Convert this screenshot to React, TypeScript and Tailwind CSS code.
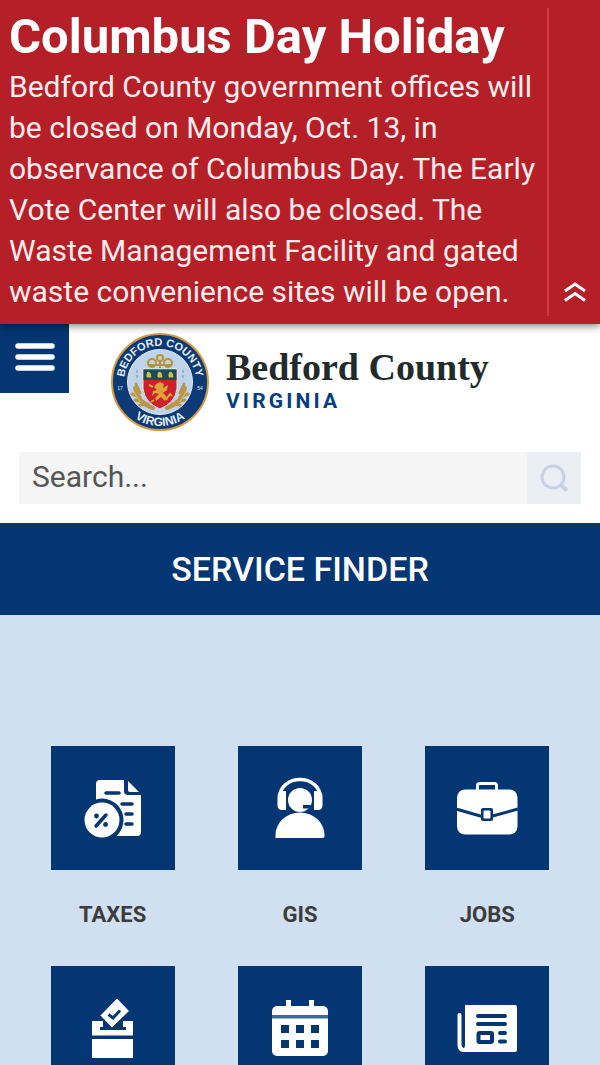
import type { ReactNode } from "react";

const NAVY = "#043673";

type Service = { name: string; label?: string; icon: ReactNode };

function TaxesIcon() {
  return (
    <>
      <path d="M49 34h24v11a4 4 0 0 0 4 4h13v37a4 4 0 0 1-4 4H45V38a4 4 0 0 1 4-4z" fill="#fff" />
      <path d="M77 35v9q0 2 2 2h9z" fill="#fff" />
      <path d="M55 47h13M71 58h10M75 68h6M75 78h6" stroke={NAVY} strokeWidth="3.5" strokeLinecap="round" />
      <circle cx="51" cy="74" r="21.5" fill={NAVY} />
      <circle cx="51" cy="74" r="17.5" fill="#fff" />
      <path d="M45 80l10-11" stroke={NAVY} strokeWidth="3.5" strokeLinecap="round" />
      <circle cx="45.5" cy="70" r="2.4" fill={NAVY} />
      <circle cx="54.5" cy="78.5" r="2.4" fill={NAVY} />
    </>
  );
}

function GisIcon() {
  return (
    <>
      <path d="M42 50a20 16.5 0 0 1 40 0" fill="none" stroke="#fff" strokeWidth="3.5" />
      <path d="M48 45v19h-4q-4 0-4.5-4V50q.5-5 4.5-5zM76 45v19h4q4 0 4.5-4V50q-.5-5-4.5-5z" fill="#fff" />
      <circle cx="62" cy="54" r="12" fill="#fff" />
      <path d="M65 59h11v3.5H65z" fill={NAVY} />
      <path d="M37.5 92v-3a24.5 22.5 0 0 1 49 0v1q0 2-2 2z" fill="#fff" />
    </>
  );
}

function JobsIcon() {
  return (
    <>
      <path d="M52.5 44v-4.5q0-2 2-2h15q2 0 2 2V44" fill="none" stroke="#fff" strokeWidth="3" />
      <rect x="32" y="43.5" width="60.5" height="45" rx="8" fill="#fff" />
      <path d="M31 63l26 7.5h9L93 63" fill="none" stroke={NAVY} strokeWidth="3" />
      <rect x="56" y="62" width="12" height="13" rx="2" fill={NAVY} />
      <rect x="58.5" y="64.5" width="7" height="8" rx="1" fill="#fff" />
    </>
  );
}

function VoteIcon() {
  return (
    <>
      <path d="M41 55h41v14.5H41zM41 73h41v19H41z" fill="#fff" />
      <path d="M49 61h3V53h20v8h3v3H49z" fill={NAVY} />
      <path d="M66 32L78.5 45 61 62 49 49.5z" fill="#fff" stroke={NAVY} strokeWidth="1" />
      <path d="M57.5 48.5l4.5 3.5 7-7.5" fill="none" stroke={NAVY} strokeWidth="3" />
    </>
  );
}

function CalendarIcon() {
  return (
    <>
      <path d="M48 34h5v8h-5zM71 34h5v8h-5z" fill="#fff" />
      <rect x="34" y="40" width="56" height="50" rx="5" fill="#fff" />
      <path d="M34 49h56v3.5H34z" fill="#416797" />
      <path
        d="M43 59h8v8h-8zM58 59h8v8h-8zM73 59h8v8h-8zM43 74h8v8h-8zM58 74h8v8h-8zM73 74h8v8h-8z"
        fill={NAVY}
      />
    </>
  );
}

function NewsIcon() {
  return (
    <>
      <path d="M40 39h50q2 0 2 2v43q0 2-2 2H38q-5.500-1-5.500-7V49q0-2 2-2t2 2v30q.5 3 2 3t1.500-3z" fill="#fff" />
      <path d="M53 50h27M53 58h27M75 67h5M75 75.500h5" stroke={NAVY} strokeWidth="4" strokeLinecap="round" />
      <rect x="53.5" y="67" width="13.5" height="9" rx="1" fill="none" stroke={NAVY} strokeWidth="4" />
    </>
  );
}

const services: Service[] = [
  { name: "taxes", label: "TAXES", icon: <TaxesIcon /> },
  { name: "gis", label: "GIS", icon: <GisIcon /> },
  { name: "jobs", label: "JOBS", icon: <JobsIcon /> },
  { name: "vote", icon: <VoteIcon /> },
  { name: "calendar", icon: <CalendarIcon /> },
  { name: "news", icon: <NewsIcon /> },
];

function Seal() {
  return (
    <svg viewBox="0 0 98 98" className="size-[98px] shrink-0" aria-hidden="true">
      <circle cx="49" cy="49" r="48" fill="#0b3a75" stroke="#d59a45" strokeWidth="2" />
      <circle cx="49" cy="49" r="32.5" fill="#bfd3ea" stroke="#e5edf5" strokeWidth="1" />
      <path id="seal-top" d="M13.5 56A36.2 36.2 0 1 1 84.5 56" fill="none" />
      <path id="seal-bottom" d="M8 65A44 44 0 0 0 90 65" fill="none" />
      <g fill="#e6eef7" fontFamily="Liberation Sans, sans-serif" fontWeight="bold" textAnchor="middle">
        <text fontSize="11">
          <textPath href="#seal-top" startOffset="50%">BEDFORD COUNTY</textPath>
        </text>
        <text fontSize="12">
          <textPath href="#seal-bottom" startOffset="50%">VIRGINIA</textPath>
        </text>
        <text x="9" y="57" fontSize="5" fontWeight="normal">17</text>
        <text x="89" y="57" fontSize="5" fontWeight="normal">54</text>
      </g>
      {/* wheat on both sides of the shield */}
      <g fill="none" stroke="#b8964a" strokeLinecap="round">
        <path d="M24 55q3 15 18 20M74 55q-3 15-18 20" strokeWidth="4" />
        <path d="M21 61l8 3M24 67l9 2M29 72l8-1M25 51l4 9M77 61l-8 3M74 67l-9 2M69 72l-8-1M73 51l-4 9" strokeWidth="3" />
        <path d="M22 57l7 12M76 57l-7 12" stroke="#ddc178" strokeWidth="1" />
      </g>
      <path d="M26 37v10M72 37v10" stroke="#788ba2" strokeWidth="1" strokeDasharray="3 2" />
      <g fill="#c9d3cd" stroke="#b39243" strokeWidth="2">
        <circle cx="41" cy="30" r="4" />
        <circle cx="57" cy="30" r="4" />
        <path d="M38 32h22M49 26v9" />
        <circle cx="49" cy="25" r="3" />
      </g>
      <path d="M32 36h34v20q-2 14-17 20-15-6-17-20z" fill="#cf202b" stroke="#e8e7df" strokeWidth="1" />
      <path d="M32.5 36.500h33V47h-33z" fill="#14505c" />
      <path d="M36 44v-3l1-2 2 1 1 4zM47 44v-3l1-2 2 1 1 4zM58 44v-3l1-2 2 1 1 4z" fill="#d4bd4e" stroke="#d4bd4e" />
      <path
        d="M45 51l4-2 4 2-1 4 5-3-1 5-4 3 4 4-2 4-4-4-5 4-1-3 4-4-4-1-3 3 1-5 4-1-3-3z"
        fill="#dca537"
      />
      <path d="M55 67l4-6 2 2M42 54l-4-2M43 67l-3 2" fill="none" stroke="#dca537" strokeWidth="2" />
    </svg>
  );
}

function Alert() {
  return (
    <section className="relative z-10 flex bg-[#b52028] py-2 text-white shadow-[0_2px_8px_rgba(0,0,0,0.5)]">
      <div className="flex-1 pb-1 pl-[9px]">
        <h2 className="text-[49px] leading-[58px] font-bold">Columbus Day Holiday</h2>
        <p className="text-[30px] leading-[41px] text-[#ffeced]">
          Bedford County government offices will be closed on Monday, Oct. 13, in observance of
          Columbus Day. The Early Vote Center will also be closed. The Waste Management Facility and
          gated waste convenience sites will be open.
        </p>
      </div>
      <button
        type="button"
        aria-label="Collapse"
        className="flex w-[53px] shrink-0 items-end justify-center border-l-2 border-[#d73743] pb-3"
      >
        <svg viewBox="0 0 24 24" className="size-6" fill="none" stroke="#fff" strokeWidth="3" aria-hidden="true">
          <path d="M2 11l10-7 10 7M2 20.500l10-7 10 7" />
        </svg>
      </button>
    </section>
  );
}

function Header() {
  return (
    <header className="bg-white pb-[19px]">
      <div className="flex items-start">
        <button
          type="button"
          aria-label="Menu"
          className="flex size-[69px] shrink-0 items-center justify-center bg-[#043673] pb-1"
        >
          <svg viewBox="0 0 40 30" className="h-[30px] w-10" aria-hidden="true">
            <path d="M3 4h34M3 15h34M3 26h34" stroke="#fff" strokeWidth="5.5" strokeLinecap="round" />
          </svg>
        </button>
        <a href="#" className="ml-[42px] flex items-center gap-[17px] pt-[9px]">
          <Seal />
          <span className="flex flex-col gap-1 pb-1.5">
            <span className="font-['Liberation_Serif',serif] text-[38px] leading-10 font-bold whitespace-nowrap text-[#222b2b]">
              Bedford County
            </span>
            <span className="text-[21px] leading-5 font-bold tracking-[0.15em] text-[#043d80]">VIRGINIA</span>
          </span>
        </a>
      </div>
      <form className="mx-[19px] mt-[21px] flex h-[52px]" onSubmit={(e) => e.preventDefault()}>
        <input
          type="text"
          aria-label="Search"
          placeholder="Search..."
          className="min-w-0 flex-1 bg-[#f5f5f5] px-[13px] pb-1 text-[30px] text-[#555] outline-none placeholder:text-[#555]"
        />
        <button
          type="submit"
          aria-label="Submit search"
          className="flex w-[54px] shrink-0 items-center justify-center bg-[#ebeff4]"
        >
          <svg viewBox="0 0 28 30" className="h-[30px] w-7" fill="none" stroke="#c7d2e4" strokeWidth="3" aria-hidden="true">
            <circle cx="13" cy="14" r="11" />
            <path d="M20.5 21.500l6.500 6" strokeWidth="4" />
          </svg>
        </button>
      </form>
    </header>
  );
}

export default function App() {
  return (
    <div className="h-screen overflow-hidden bg-[#d1e0f0] font-['Roboto',sans-serif]">
      <Alert />
      <Header />
      <h1 className="bg-[#043673] text-center text-[34px] leading-[92px] font-medium text-white">SERVICE FINDER</h1>
      <main className="grid grid-cols-3 px-[19px] pt-[131px]">
        {services.map((s) => (
          <a key={s.name} href={"#" + s.name} aria-label={s.name} className="flex flex-col items-center">
            <span className="bg-[#043673]">
              <svg viewBox="0 0 124 124" className="size-31" aria-hidden="true">
                {s.icon}
              </svg>
            </span>
            <span className="pt-[30px] pb-[36px] text-[22px] leading-[30px] font-bold text-[#3c3c3c]">{s.label}</span>
          </a>
        ))}
      </main>
    </div>
  );
}
